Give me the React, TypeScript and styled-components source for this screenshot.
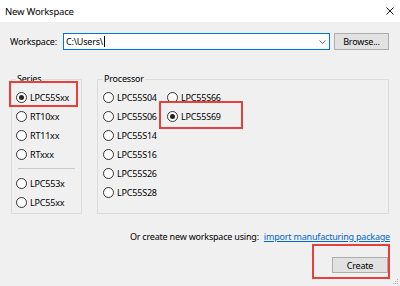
import React from 'react';
import styled, { createGlobalStyle } from 'styled-components';

const GlobalStyle = createGlobalStyle`
  html, body {
    margin: 0;
    padding: 0;
    background: #f0f0f0;
  }
  body {
    font-family: "Noto Sans", "Open Sans", sans-serif;
    font-size: 9px;
    letter-spacing: -0.2px;
    color: #000;
  }
`;

const Window = styled.div`
  position: relative;
  width: 400px;
  height: 286px;
  display: flex;
  flex-direction: column;
  overflow: hidden;
`;

const TitleBar = styled.div`
  height: 22px;
  background: #fff;
  display: flex;
  align-items: center;
  justify-content: space-between;
  padding: 0 6px 0 5px;
  font-size: 9.5px;
`;

const Body = styled.div`
  flex: 1;
  background: #f0f0f0;
  padding: 11px 11px 0 10px;
  display: flex;
  flex-direction: column;
`;

const WorkspaceRow = styled.div`
  display: flex;
  align-items: center;
  height: 17px;
`;

const FieldLabel = styled.span`
  width: 53px;
`;

const Combo = styled.div`
  flex: 1;
  height: 17px;
  box-sizing: border-box;
  border: 1px solid #0078d7;
  background: #fff;
  display: flex;
  align-items: center;
  padding: 0 3px 0 2px;
`;

const ComboText = styled.span`
  flex: 1;
  display: flex;
  align-items: center;
`;

const Caret = styled.span`
  width: 1px;
  height: 11px;
  background: #000;
  margin-left: 1px;
`;

const Button = styled.button<{ $w: number; $h: number }>`
  width: ${p => p.$w}px;
  height: ${p => p.$h}px;
  box-sizing: border-box;
  border: 1px solid #adadad;
  background: #e1e1e1;
  font: inherit;
  letter-spacing: inherit;
  color: #000;
  padding: 0;
`;

const BrowseButton = styled(Button)`
  margin-left: 4px;
`;

const Groups = styled.div`
  display: flex;
  align-items: stretch;
  gap: 15px;
  margin: 21px 0 0 1px;
`;

const Group = styled.fieldset<{ $w?: number; $pad: number; $bottom: number }>`
  margin: 0;
  min-width: 0;
  border: 1px solid #dcdcdc;
  padding: 1px 4px ${p => p.$bottom}px ${p => p.$pad}px;
  ${p => (p.$w ? `width: ${p.$w}px; box-sizing: border-box;` : 'flex: 1;')}
`;

const Legend = styled.legend`
  padding: 0 1px;
  line-height: 16px;
`;

const ProcessorGrid = styled.div`
  display: grid;
  grid-template-rows: repeat(6, 19px);
  grid-template-columns: 64px auto;
  grid-auto-flow: column;
`;

const RadioRow = styled.div`
  position: relative;
  height: 19px;
  display: flex;
  align-items: center;
  gap: 3px;
  white-space: nowrap;
`;

const RadioCircle = styled.span<{ $on?: boolean }>`
  width: 11px;
  height: 11px;
  box-sizing: border-box;
  border: 1px solid #333;
  border-radius: 50%;
  background: #fff;
  display: flex;
  align-items: center;
  justify-content: center;
  flex-shrink: 0;
  &::after {
    content: '';
    display: ${p => (p.$on ? 'block' : 'none')};
    width: 5px;
    height: 5px;
    border-radius: 50%;
    background: #222;
  }
`;

const Separator = styled.div`
  height: 1px;
  background: #c8c8c8;
  margin: 4px 2px 5px 2px;
`;

const Highlight = styled.span<{ $l: number; $t: number; $w: number; $h: number }>`
  position: absolute;
  left: ${p => p.$l}px;
  top: ${p => p.$t}px;
  width: ${p => p.$w}px;
  height: ${p => p.$h}px;
  box-sizing: border-box;
  border: 2px solid #e5403b;
  pointer-events: none;
`;

const Footer = styled.div`
  margin: 15px -1px 0 0;
  line-height: 16px;
  text-align: right;
  white-space: nowrap;
`;

const Link = styled.a`
  color: #0066cc;
  text-decoration: underline;
  margin-left: 5px;
`;

const ButtonRow = styled.div`
  display: flex;
  justify-content: flex-end;
  margin: 12px 1px 0 0;
`;

const CreateWrap = styled.div`
  position: relative;
  display: flex;
`;

const Grip = styled.svg`
  position: absolute;
  right: 1px;
  bottom: 1px;
`;

const Radio: React.FC<{ label: string; on?: boolean; children?: React.ReactNode }> = ({ label, on, children }) => (
  <RadioRow>
    <RadioCircle $on={on} />
    <span>{label}</span>
    {children}
  </RadioRow>
);

const processors = ['LPC55S04', 'LPC55S06', 'LPC55S14', 'LPC55S16', 'LPC55S26', 'LPC55S28', 'LPC55S66'];

export default function App() {
  return (
    <>
      <GlobalStyle />
      <Window>
        <TitleBar>
          <span>New Workspace</span>
          <svg width="8" height="8" viewBox="0 0 8 8">
            <path d="M0.5 0.5 L7.5 7.5 M7.5 0.5 L0.5 7.5" stroke="#000" strokeWidth="0.9" />
          </svg>
        </TitleBar>
        <Body>
          <WorkspaceRow>
            <FieldLabel>Workspace:</FieldLabel>
            <Combo>
              <ComboText>
                {'C:\\Users\\'}
                <Caret />
              </ComboText>
              <svg width="7" height="4" viewBox="0 0 7 4">
                <path d="M0.5 0.5 L3.5 3.5 L6.5 0.5" stroke="#606060" strokeWidth="0.9" fill="none" />
              </svg>
            </Combo>
            <BrowseButton $w={55} $h={17}>Browse...</BrowseButton>
          </WorkspaceRow>

          <Groups>
            <Group $w={71} $pad={4} $bottom={0}>
              <Legend>Series</Legend>
              <Radio label="LPC55Sxx" on>
                <Highlight $l={-7} $t={-7} $w={69} $h={26} />
              </Radio>
              <Radio label="RT10xx" />
              <Radio label="RT11xx" />
              <Radio label="RTxxx" />
              <Separator />
              <Radio label="LPC553x" />
              <Radio label="LPC55xx" />
            </Group>
            <Group $pad={5} $bottom={11}>
              <Legend>Processor</Legend>
              <ProcessorGrid>
                {processors.map(p => (
                  <Radio key={p} label={p} />
                ))}
                <Radio label="LPC55S69" on>
                  <Highlight $l={-8} $t={-6} $w={84} $h={28} />
                </Radio>
              </ProcessorGrid>
            </Group>
          </Groups>

          <Footer>
            Or create new workspace using:
            <Link href="#">import manufacturing package</Link>
          </Footer>

          <ButtonRow>
            <CreateWrap>
              <Button $w={56} $h={16}>Create</Button>
              <Highlight $l={-20} $t={-13} $w={78} $h={35} />
            </CreateWrap>
          </ButtonRow>
        </Body>
        <Grip width="6" height="6" viewBox="0 0 6 6">
          <rect x="4" y="0" width="1" height="1" fill="#b0b0b0" />
          <rect x="2" y="2" width="1" height="1" fill="#b0b0b0" />
          <rect x="4" y="2" width="1" height="1" fill="#b0b0b0" />
          <rect x="0" y="4" width="1" height="1" fill="#b0b0b0" />
          <rect x="2" y="4" width="1" height="1" fill="#b0b0b0" />
          <rect x="4" y="4" width="1" height="1" fill="#b0b0b0" />
        </Grip>
      </Window>
    </>
  );
}
